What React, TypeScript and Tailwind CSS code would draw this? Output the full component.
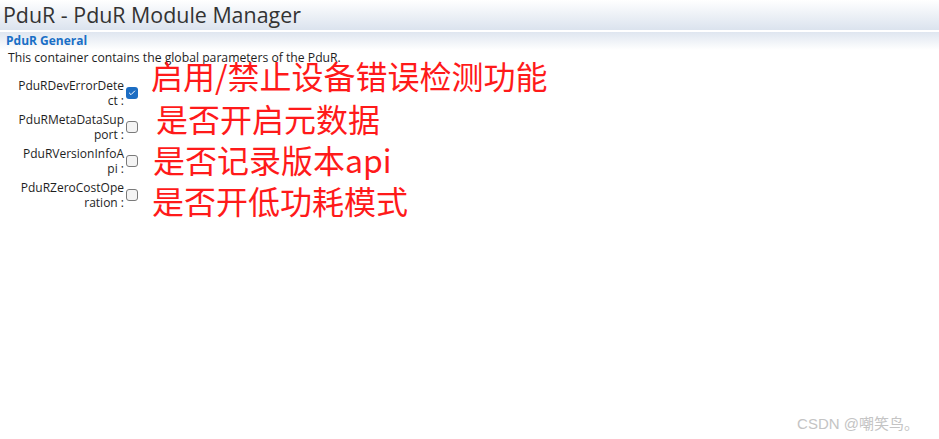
import { Check } from 'lucide-react';

const params = [
  { first: 'PduRDevErrorDete', rest: 'ct :', checked: true },
  { first: 'PduRMetaDataSup', rest: 'port :', checked: false },
  { first: 'PduRVersionInfoA', rest: 'pi :', checked: false },
  { first: 'PduRZeroCostOpe', rest: 'ration :', checked: false },
];

// red hand-written notes laid over the editor
const notes = [
  { text: '启用/禁止设备错误检测功能', cls: 'left-[151px] top-[59px]' },
  { text: '是否开启元数据', cls: 'left-[156px] top-[102px]' },
  { text: '是否记录版本api', cls: 'left-[153px] top-[143px]' },
  { text: '是否开低功耗模式', cls: 'left-[152px] top-[184px]' },
];

function CheckBox({ checked }: { checked: boolean }) {
  if (checked) {
    return (
      <span className="flex h-[12px] w-[12px] shrink-0 items-center justify-center rounded-[3px] bg-[#1c6dc3]">
        <Check className="h-[8px] w-[8px] text-white" strokeWidth={3} />
      </span>
    );
  }
  return <span className="block h-[12px] w-[12px] shrink-0 rounded-[3px] border border-[#7a7a7a] bg-[#f4f4f4]" />;
}

export default function App() {
  return (
    <div className="relative h-[439px] w-[939px] overflow-hidden bg-white font-['Open_Sans','Noto_Sans_CJK_SC',sans-serif] text-[#1e1e1e]">
      <header className="h-[30px] bg-gradient-to-b from-white to-[#dbe3ee] pl-[3px] text-[21.4px] leading-[30px] text-[#333]">
        PduR - PduR Module Manager
      </header>
      <div className="h-[2px] bg-white" />
      <section>
        <div className="h-[18px] bg-gradient-to-b from-[#dfe6f0] to-white pl-[6px] text-[12px] font-bold leading-[18px] text-[#1a6fc6]">
          PduR General
        </div>
        <p className="pl-[8px] text-[12.2px] leading-[16px]">This container contains the global parameters of the PduR.</p>
        <div className="mt-[12px] flex flex-col gap-[4px]">
          {params.map((p) => (
            <div key={p.first} className="flex items-center">
              <div className="w-[124px] text-right text-[12px] leading-[15px]">
                {p.first}
                <br />
                {p.rest}
              </div>
              <div className="ml-[2px]">
                <CheckBox checked={p.checked} />
              </div>
            </div>
          ))}
        </div>
      </section>

      {notes.map((n) => (
        <div
          key={n.text}
          className={`absolute whitespace-nowrap font-['Noto_Sans_CJK_SC',sans-serif] text-[32px] leading-none text-[#ff1a1a] ${n.cls}`}
        >
          {n.text}
        </div>
      ))}

      <div className="absolute bottom-[4px] right-[20px] font-['Liberation_Sans','Noto_Sans_CJK_SC',sans-serif] text-[15px] text-[#c4c4c4]">
        CSDN @嘲笑鸟。
      </div>
    </div>
  );
}
